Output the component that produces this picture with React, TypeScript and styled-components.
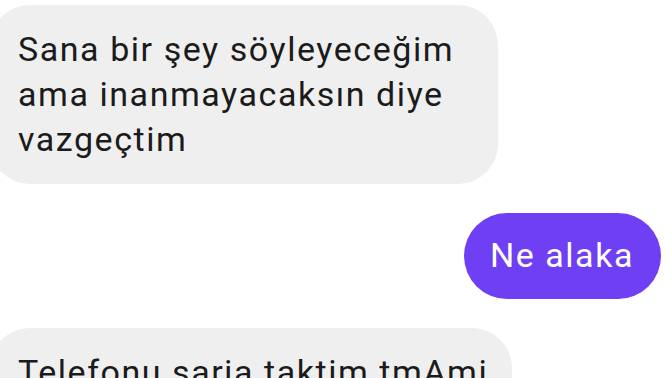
import React from "react";
import styled, { createGlobalStyle } from "styled-components";

const Global = createGlobalStyle`
  html, body { margin: 0; padding: 0; background: #ffffff; overflow: hidden; }
  body { font-family: Roboto, "Noto Sans", sans-serif; }
`;

const Thread = styled.div`
  width: 672px;
  height: 378px;
  overflow: hidden;
  box-sizing: border-box;
  padding-top: 5px;
  display: flex;
  flex-direction: column;
  gap: 29px;
`;

const Row = styled.div<{ $out?: boolean }>`
  display: flex;
  justify-content: ${(p) => (p.$out ? "flex-end" : "flex-start")};
  padding-right: ${(p) => (p.$out ? "11px" : "0")};
`;

const Bubble = styled.div<{ $out?: boolean; $width?: string }>`
  box-sizing: border-box;
  width: ${(p) => p.$width ?? "auto"};
  white-space: pre-line;
  font-size: 34px;
  line-height: 45px;
  letter-spacing: 1.55px;
  border-radius: ${(p) => (p.$out ? "43px" : "40px")};
  background: ${(p) => (p.$out ? "#6f3ff4" : "#efefef")};
  color: ${(p) => (p.$out ? "#ffffff" : "#1b1b1b")};
  padding: ${(p) => (p.$out ? "20px 27px 21px 26px" : "22px 24px 22px 28px")};
  margin-left: ${(p) => (p.$out ? "0" : "-10px")};
`;

export default function App() {
  return (
    <>
      <Global />
      <Thread>
        <Row>
          <Bubble $width="508px">{"Sana bir şey söyleyeceğim\nama inanmayacaksın diye\nvazgeçtim"}</Bubble>
        </Row>
        <Row $out>
          <Bubble $out>Ne alaka</Bubble>
        </Row>
        <Row>
          <Bubble>{"Telefonu sarja taktim tmAmi\nbir şey daha"}</Bubble>
        </Row>
      </Thread>
    </>
  );
}
